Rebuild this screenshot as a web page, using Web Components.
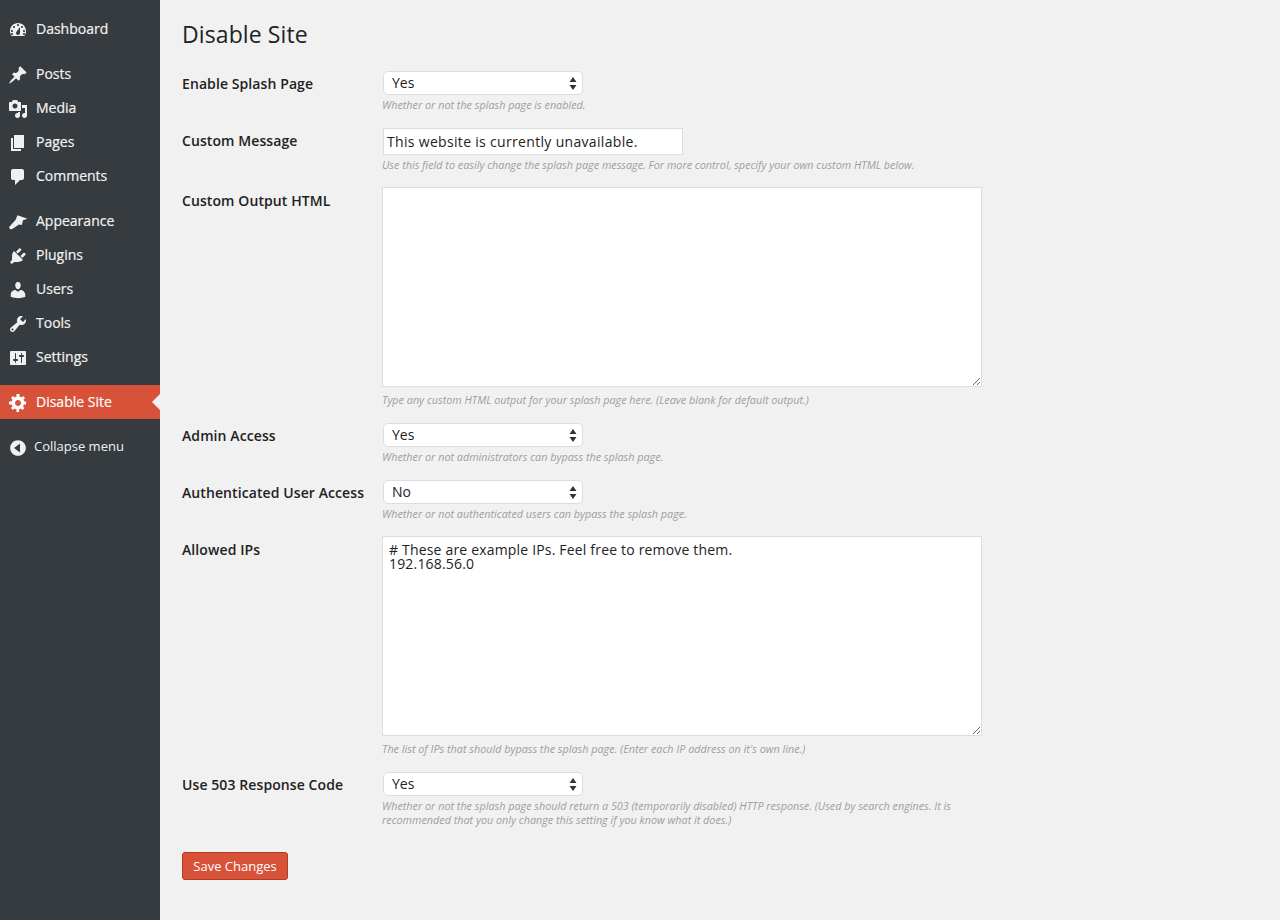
<!DOCTYPE html>
<html>
<head>
<meta charset="utf-8">
<title>Disable Site</title>
<style>
html, body { margin: 0; height: 100%; background: #f1f1f1; }
body { display: flex; font-family: "Open Sans", sans-serif; font-size: 14px; color: #222; min-height: 920px; }
</style>
</head>
<body>
<wp-sidebar>
  <wp-menu-group>
    <wp-menu-item icon="dashboard">Dashboard</wp-menu-item>
  </wp-menu-group>
  <wp-menu-group>
    <wp-menu-item icon="post">Posts</wp-menu-item>
    <wp-menu-item icon="media">Media</wp-menu-item>
    <wp-menu-item icon="page">Pages</wp-menu-item>
    <wp-menu-item icon="comments">Comments</wp-menu-item>
  </wp-menu-group>
  <wp-menu-group>
    <wp-menu-item icon="appearance">Appearance</wp-menu-item>
    <wp-menu-item icon="plugins">Plugins</wp-menu-item>
    <wp-menu-item icon="users">Users</wp-menu-item>
    <wp-menu-item icon="tools">Tools</wp-menu-item>
    <wp-menu-item icon="settings">Settings</wp-menu-item>
  </wp-menu-group>
  <wp-menu-group>
    <wp-menu-item icon="gear" active>Disable Site</wp-menu-item>
  </wp-menu-group>
  <wp-menu-group>
    <wp-menu-item icon="collapse" small>Collapse menu</wp-menu-item>
  </wp-menu-group>
</wp-sidebar>

<wp-settings-page heading="Disable Site">
  <wp-field label="Enable Splash Page">
    <wp-select>Yes</wp-select>
    <span slot="hint">Whether or not the splash page is enabled.</span>
  </wp-field>
  <wp-field label="Custom Message">
    <wp-text-input>This website is currently unavailable.</wp-text-input>
    <span slot="hint">Use this field to easily change the splash page message. For more control, specify your own custom HTML below.</span>
  </wp-field>
  <wp-field label="Custom Output HTML">
    <wp-textarea></wp-textarea>
    <span slot="hint">Type any custom HTML output for your splash page here. (Leave blank for default output.)</span>
  </wp-field>
  <wp-field label="Admin Access">
    <wp-select>Yes</wp-select>
    <span slot="hint">Whether or not administrators can bypass the splash page.</span>
  </wp-field>
  <wp-field label="Authenticated User Access">
    <wp-select>No</wp-select>
    <span slot="hint">Whether or not authenticated users can bypass the splash page.</span>
  </wp-field>
  <wp-field label="Allowed IPs">
    <wp-textarea value="# These are example IPs. Feel free to remove them.&#10;192.168.56.0"></wp-textarea>
    <span slot="hint">The list of IPs that should bypass the splash page. (Enter each IP address on it's own line.)</span>
  </wp-field>
  <wp-field label="Use 503 Response Code">
    <wp-select>Yes</wp-select>
    <span slot="hint">Whether or not the splash page should return a 503 (temporarily disabled) HTTP response. (Used by search engines. It is recommended that you only change this setting if you know what it does.)</span>
  </wp-field>
  <wp-button>Save Changes</wp-button>
</wp-settings-page>

<script>
// dashicons style glyphs, 20x20
const ICONS = {
  dashboard: 'M3.76 16h12.48c1.1-1.37 1.76-3.11 1.76-5 0-4.42-3.58-8-8-8s-8 3.58-8 8c0 1.89.66 3.63 1.76 5zM10 4c.55 0 1 .45 1 1s-.45 1-1 1-1-.45-1-1 .45-1 1-1zM6 6c.55 0 1 .45 1 1s-.45 1-1 1-1-.45-1-1 .45-1 1-1zm8 0c.55 0 1 .45 1 1s-.45 1-1 1-1-.45-1-1 .45-1 1-1zm-5.37 5.55L12 7v6c0 1.1-.9 2-2 2s-2-.9-2-2c0-.57.24-1.08.63-1.45zM4 10c.55 0 1 .45 1 1s-.45 1-1 1-1-.45-1-1 .45-1 1-1zm12 0c.55 0 1 .45 1 1s-.45 1-1 1-1-.45-1-1 .45-1 1-1zm-12 3c.55 0 1 .45 1 1s-.45 1-1 1-1-.45-1-1 .45-1 1-1zm12 0c.55 0 1 .45 1 1s-.45 1-1 1-1-.45-1-1 .45-1 1-1z',
  post: 'M10.44 3.02l1.82-1.82 6.36 6.35-1.83 1.82c-1.05-.68-2.48-.57-3.41.36l-.75.75c-.92.93-1.04 2.35-.35 3.41l-1.83 1.82-2.41-2.41-2.8 2.79c-.42.42-3.38 2.71-3.8 2.29s1.86-3.39 2.28-3.81l2.79-2.79L4.1 9.36l1.83-1.82c1.05.69 2.48.57 3.41-.36l.75-.75c.93-.92 1.04-2.35.35-3.41z',
  media: 'M13 11V4c0-.55-.45-1-1-1h-1.67L9 1H5L3.67 3H2c-.55 0-1 .45-1 1v7c0 .55.45 1 1 1h10c.55 0 1-.45 1-1zM7 4.5c1.38 0 2.5 1.12 2.5 2.5S8.38 9.5 7 9.5 4.5 8.38 4.5 7 5.62 4.5 7 4.5zM14 6h5v10.5c0 1.38-1.12 2.5-2.5 2.5S14 17.88 14 16.5s1.12-2.5 2.5-2.5c.17 0 .34.02.5.05V9h-3V6zm-4 8.05V13h2v3.5c0 1.38-1.12 2.5-2.5 2.5S7 17.88 7 16.5 8.12 14 9.5 14c.17 0 .34.02.5.05z',
  page: 'M6 15V2h10v13H6zm-1 1h8v2H3V5h2v11z',
  comments: 'M5 2h9c1.1 0 2 .9 2 2v7c0 1.1-.9 2-2 2h-2l-5 5v-5H5c-1.1 0-2-.9-2-2V4c0-1.1.9-2 2-2z',
  appearance: 'M9.500 3.200L19.500 6.800 15 8.300 13.800 13 11 12.600 5 16.500c-1 1-2.500 1-3.200.2C1 16 1 15 2 14L7.500 8z',
  plugins: 'M13.11 4.36L9.87 7.6 8 5.73l3.24-3.24c.35-.34 1.05-.2 1.56.32.52.51.66 1.21.31 1.55zm-8 1.77l.91-1.12 9.01 9.01-1.19.84c-.71.71-2.63 1.16-3.82 1.16H6.14L4.9 17.26c-.59.59-1.54.59-2.12 0-.59-.58-.59-1.53 0-2.12l1.24-1.24v-3.88c0-1.13.4-3.19 1.09-3.89zm7.26 3.97l3.24-3.24c.34-.35 1.04-.21 1.55.31.52.51.66 1.21.31 1.55l-3.24 3.25z',
  users: 'M10 9.25c-2.27 0-2.73-3.44-2.73-3.44C7 4.02 7.82 2 9.97 2c2.16 0 2.98 2.02 2.71 3.81 0 0-.41 3.44-2.68 3.44zm0 2.57L12.72 10c2.39 0 4.52 2.33 4.52 4.53v2.49s-3.65 1.13-7.24 1.13c-3.65 0-7.24-1.13-7.24-1.13v-2.49c0-2.25 1.94-4.48 4.47-4.48z',
  tools: 'M16.68 9.77c-1.34 1.34-3.3 1.67-4.95.99l-5.41 6.52c-.99.99-2.59.99-3.57 0-.99-.98-.99-2.58 0-3.57l6.52-5.42c-.68-1.65-.35-3.61.99-4.95 1.28-1.28 3.12-1.62 4.72-1.06l-2.89 2.89 2.82 2.82 2.86-2.87c.53 1.58.18 3.4-1.09 4.65zM3.81 16.21c.4.39 1.03.39 1.42 0 .4-.4.4-1.03 0-1.43-.39-.39-1.02-.39-1.42 0-.39.4-.39 1.03 0 1.43z',
  settings: 'M18 16V4c0-.55-.45-1-1-1H3c-.55 0-1 .45-1 1v12c0 .55.45 1 1 1h14c.55 0 1-.45 1-1zM8 11h1c.55 0 1 .45 1 1s-.45 1-1 1H8v1.500c0 .28-.22.5-.5.5s-.5-.22-.5-.5V13H6c-.55 0-1-.45-1-1s.45-1 1-1h1V5.500c0-.28.22-.5.5-.5s.5.22.5.5V11zm5-2h-1c-.55 0-1-.45-1-1s.45-1 1-1h1V5.500c0-.28.22-.5.5-.5s.5.22.5.5V7h1c.55 0 1 .45 1 1s-.45 1-1 1h-1v5.500c0 .28-.22.5-.5.5s-.5-.22-.5-.5V9z',
  gear: 'M18 11.500h-2.180c-.17.7-.44 1.350-.81 1.930l1.540 1.540-2.120 2.120-1.540-1.540c-.58.36-1.230.64-1.910.81V19H8.500v-2.640c-.68-.17-1.330-.45-1.910-.81l-1.540 1.540-2.120-2.120 1.540-1.540c-.36-.58-.64-1.230-.81-1.910H1V8.500h2.660c.17-.68.45-1.330.81-1.910L2.930 5.050l2.120-2.120 1.540 1.540c.58-.36 1.230-.64 1.910-.81V1h3v2.660c.68.17 1.330.45 1.910.81l1.540-1.540 2.120 2.120-1.540 1.540c.36.58.64 1.230.81 1.910H18v3zM10 13c1.660 0 3-1.340 3-3s-1.340-3-3-3-3 1.340-3 3 1.340 3 3 3z',
  collapse: 'M10 2.160c4.330 0 7.840 3.510 7.840 7.840s-3.510 7.840-7.840 7.840S2.160 14.330 2.160 10 5.670 2.160 10 2.160zM12 14.500v-9L6 10z'
}

class WpSidebar extends HTMLElement {
  constructor(){
    super()
    this.attachShadow({mode: 'open'})
    this.shadowRoot.innerHTML = `
    <style>
    :host{
      display: flex;
      flex-direction: column;
      gap: 11px;
      flex: none;
      width: 160px;
      padding-top: 12px;
      box-sizing: border-box;
      background: #363b3f;
      color: #f0f0f0;
    }
    </style>
    <slot></slot>`
  }
}

class WpMenuGroup extends HTMLElement {
  constructor(){
    super()
    this.attachShadow({mode: 'open'})
    this.shadowRoot.innerHTML = `<style>:host{display: block;}</style><slot></slot>`
  }
}

class WpMenuItem extends HTMLElement {
  constructor(){
    super()
    this.attachShadow({mode: 'open'})
    const d = ICONS[this.getAttribute('icon')]
    this.shadowRoot.innerHTML = `
    <style>
    :host{
      display: flex;
      align-items: center;
      position: relative;
      height: 34px;
      font-size: 14px;
      color: #f2f2f2;
      -webkit-text-stroke: .2px #f2f2f2;
    }
    :host([active]){ background: #d8523a; color: #fff; }
    :host([small]){ font-size: 13px; -webkit-text-stroke: 0; }
    svg{ flex: none; width: 20px; height: 20px; margin: 2px 8.5px 0 7.5px; fill: #f0f0f0; }
    :host([small]) svg{ margin-right: 6.5px; }
    :host([active]) svg{ fill: #fff; }
    .text{ margin-bottom: 2px; }
    .arrow{
      display: none;
      position: absolute;
      right: 0;
      top: 9px;
      border: 8px solid transparent;
      border-left-width: 0;
      border-right-color: #f1f1f1;
    }
    :host([active]) .arrow{ display: block; }
    </style>
    <svg viewBox="0 0 20 20"><path fill-rule="evenodd" d="${d}"/></svg>
    <span class="text"><slot></slot></span>
    <span class="arrow"></span>`
  }
}

class WpSettingsPage extends HTMLElement {
  constructor(){
    super()
    this.attachShadow({mode: 'open'})
    this.shadowRoot.innerHTML = `
    <style>
    :host{
      display: block;
      flex: 1;
      padding: 19px 0 0 22px;
    }
    h1{
      margin: 0 0 22px;
      font-size: 23px;
      font-weight: 400;
      line-height: 30px;
      letter-spacing: .1px;
      color: #222;
    }
    .rows{
      display: flex;
      flex-direction: column;
      gap: 16px;
    }
    </style>
    <h1>${this.getAttribute('heading')}</h1>
    <div class="rows"><slot></slot></div>`
  }
}

class WpField extends HTMLElement {
  constructor(){
    super()
    this.attachShadow({mode: 'open'})
    this.shadowRoot.innerHTML = `
    <style>
    :host{
      display: grid;
      grid-template-columns: 200px 600px;
    }
    .label{
      font-size: 14px;
      font-weight: 600;
      line-height: 26px;
      letter-spacing: .09px;
      color: #222;
    }
    .hint{
      font-size: 10.8px;
      font-style: italic;
      line-height: 14px;
      margin-top: 3px;
      color: #9e9e9e;
    }
    </style>
    <div class="label">${this.getAttribute('label')}</div>
    <div>
      <slot></slot>
      <div class="hint"><slot name="hint"></slot></div>
    </div>`
  }
}

class WpSelect extends HTMLElement {
  constructor(){
    super()
    this.attachShadow({mode: 'open'})
    this.shadowRoot.innerHTML = `
    <style>
    :host{
      display: flex;
      align-items: center;
      justify-content: space-between;
      box-sizing: border-box;
      width: 200px;
      height: 24px;
      margin-left: 1px;
      padding: 0 5px 2px 8px;
      background: #fff;
      border: 1px solid #ddd;
      border-radius: 5px;
      font-size: 14px;
      color: #222;
    }
    svg{ width: 8px; height: 13px; margin-top: 2px; fill: #333; }
    </style>
    <slot></slot>
    <svg viewBox="0 0 8 13"><path d="M4 0l3.500 5h-7zM4 13L.5 8h7z"/></svg>`
  }
}

class WpTextInput extends HTMLElement {
  constructor(){
    super()
    this.attachShadow({mode: 'open'})
    this.shadowRoot.innerHTML = `
    <style>
    :host{
      display: flex;
      align-items: center;
      box-sizing: border-box;
      width: 300px;
      height: 27px;
      margin-left: 1px;
      padding: 0 3px;
      background: #fff;
      border: 1px solid #ddd;
      font-size: 14px;
      letter-spacing: .32px;
      color: #222;
    }
    </style>
    <slot></slot>`
  }
}

class WpTextarea extends HTMLElement {
  constructor(){
    super()
    this.attachShadow({mode: 'open'})
    this.shadowRoot.innerHTML = `
    <style>
    :host{
      display: block;
      margin: -1px 0 6px;
    }
    textarea{
      display: block;
      box-sizing: border-box;
      width: 600px;
      height: 200px;
      padding: 6px;
      margin: 0;
      background: #fff;
      border: 1px solid #ddd;
      border-radius: 0;
      outline: none;
      font: 14px/14px "Open Sans", sans-serif;
      letter-spacing: .18px;
      color: #222;
    }
    </style>
    <textarea></textarea>`
    this.shadowRoot.querySelector('textarea').textContent = this.getAttribute('value') ?? ''
  }
}

class WpButton extends HTMLElement {
  constructor(){
    super()
    this.attachShadow({mode: 'open'})
    this.shadowRoot.innerHTML = `
    <style>
    :host{
      display: flex;
      align-items: center;
      justify-content: center;
      box-sizing: border-box;
      width: 106px;
      height: 28px;
      margin-top: 9px;
      background: #d8523a;
      border: 1px solid #b83a23;
      border-radius: 3px;
      font-size: 13px;
      color: #fff;
    }
    </style>
    <slot></slot>`
  }
}

customElements.define('wp-sidebar', WpSidebar)
customElements.define('wp-menu-group', WpMenuGroup)
customElements.define('wp-menu-item', WpMenuItem)
customElements.define('wp-settings-page', WpSettingsPage)
customElements.define('wp-field', WpField)
customElements.define('wp-select', WpSelect)
customElements.define('wp-text-input', WpTextInput)
customElements.define('wp-textarea', WpTextarea)
customElements.define('wp-button', WpButton)
</script>
</body>
</html>
